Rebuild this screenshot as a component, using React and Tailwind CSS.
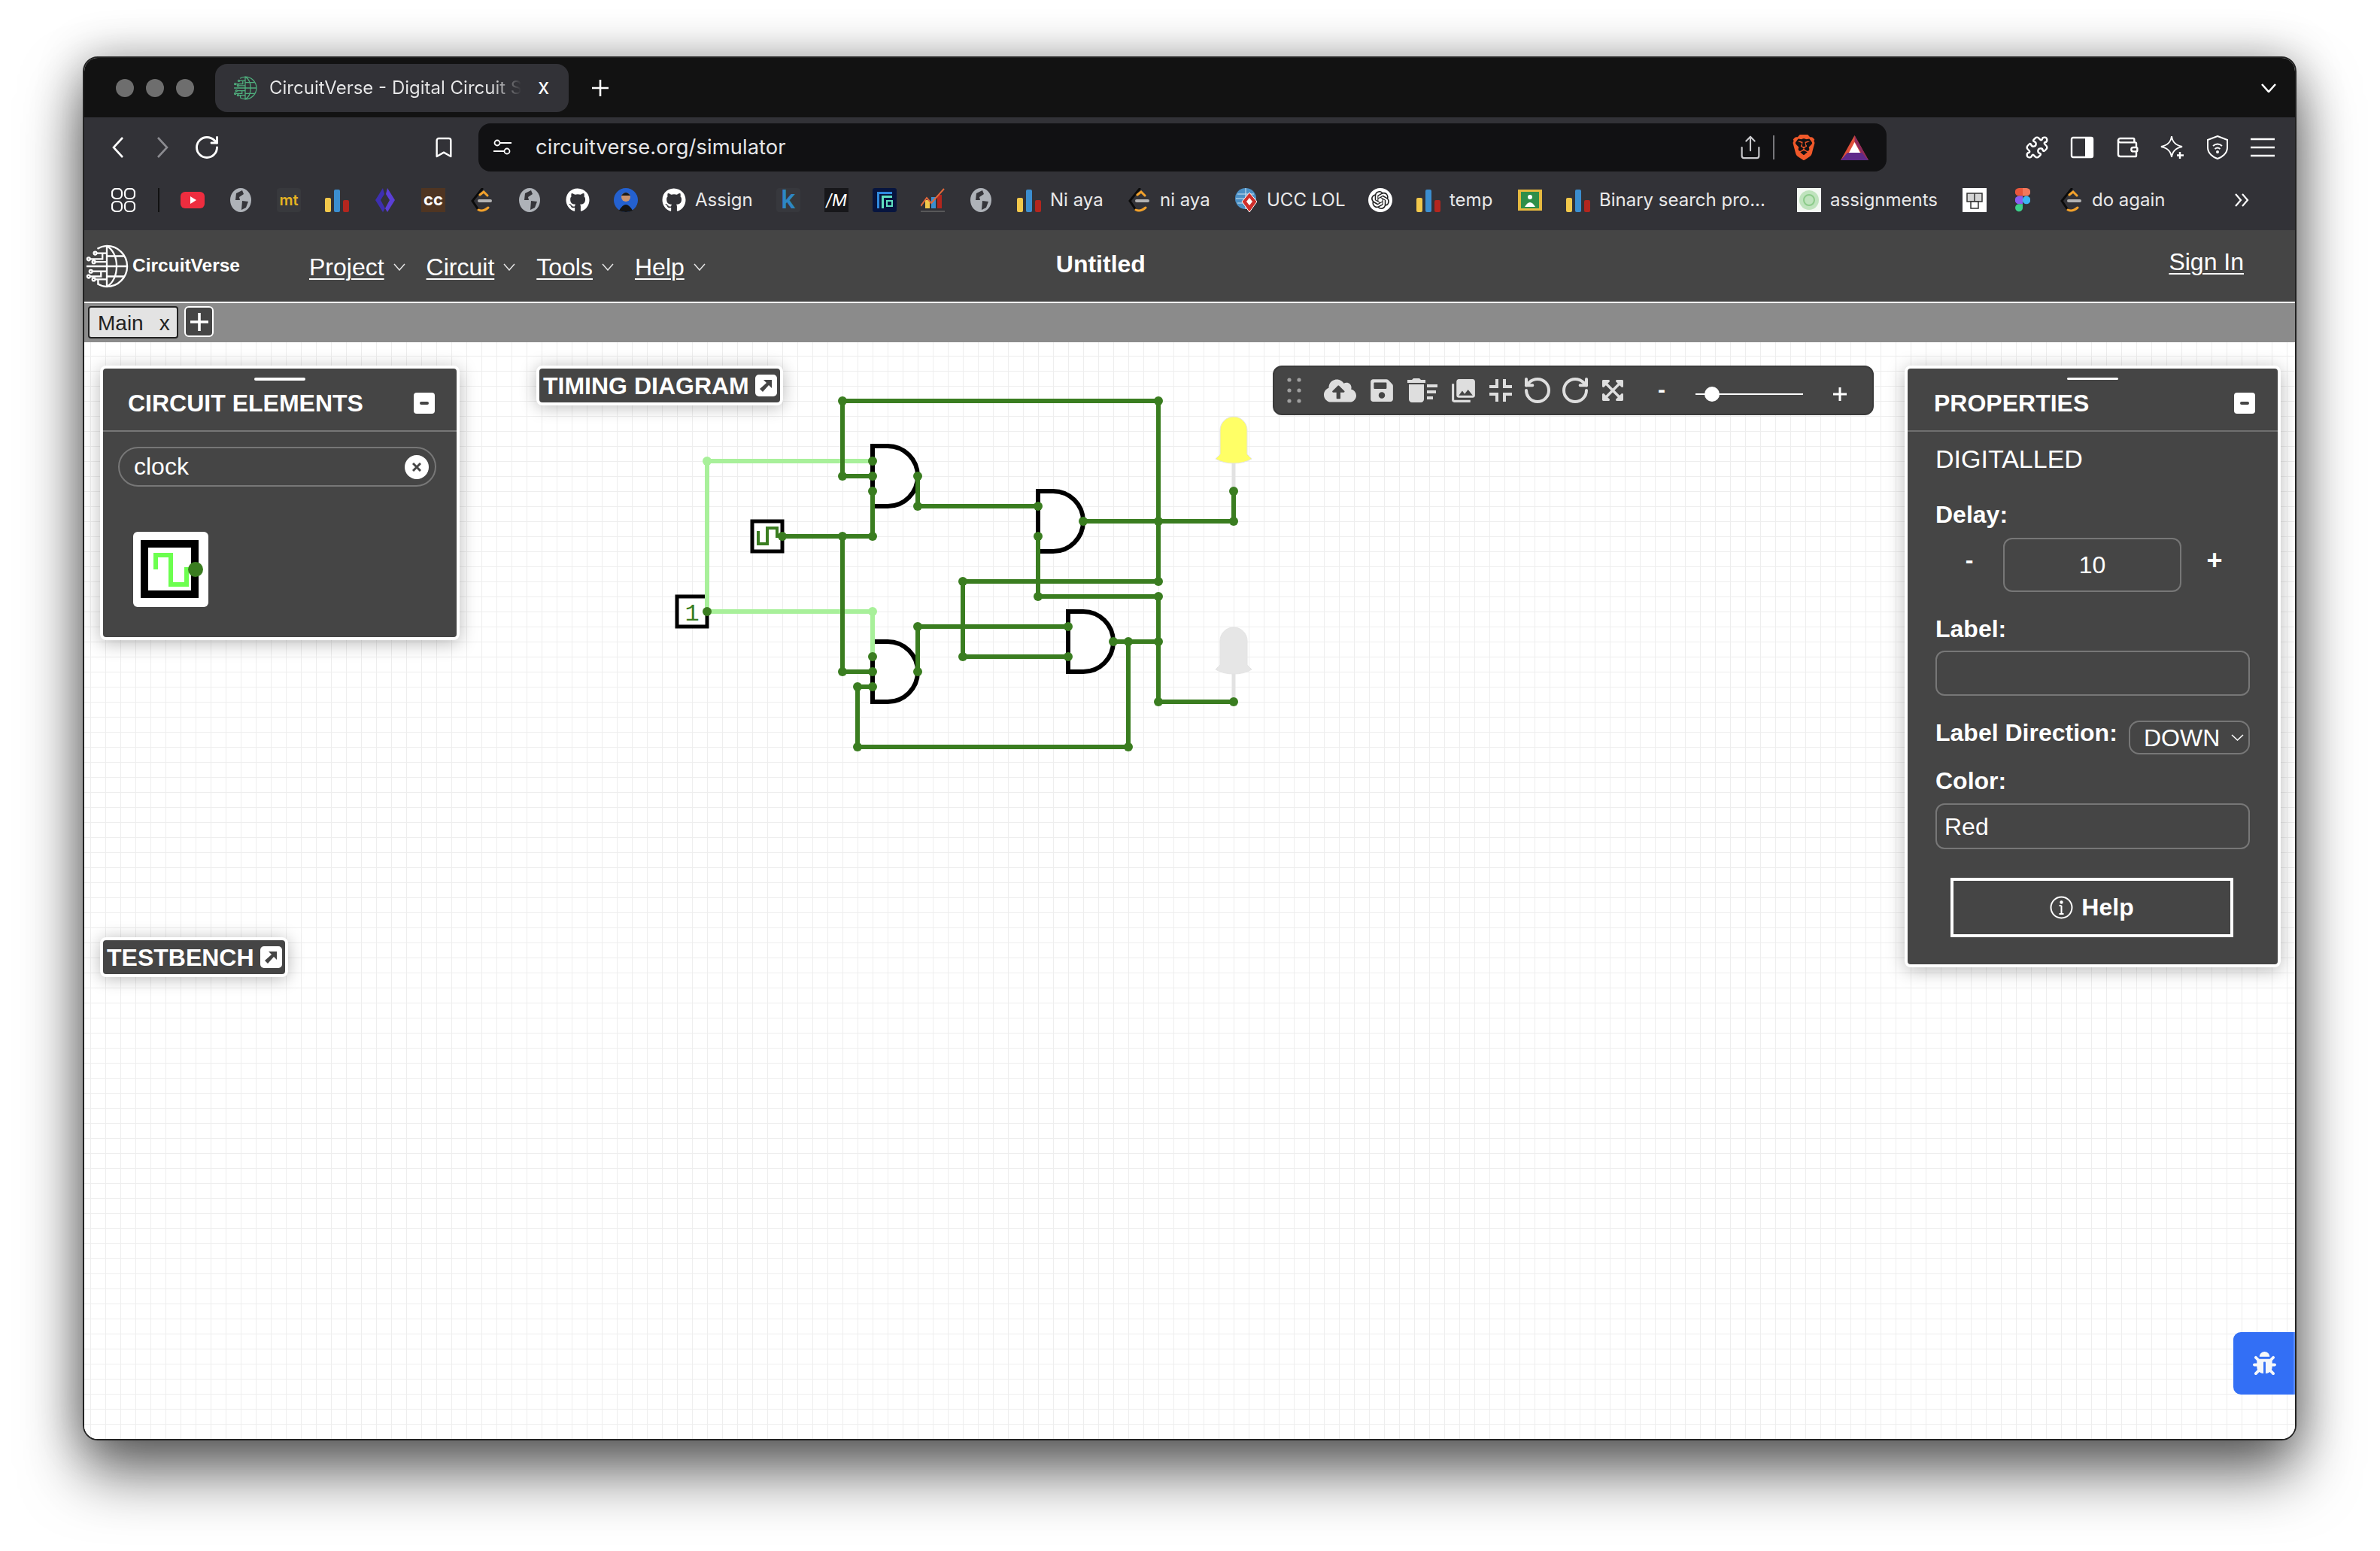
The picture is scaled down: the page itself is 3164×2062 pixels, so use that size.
import {
  Bookmark, Puzzle, RotateCcw, RotateCw, Share, Wallet,
} from 'lucide-react'
import { FaBug, FaCloudUploadAlt, FaExpandArrowsAlt, FaGithub, FaSave } from 'react-icons/fa'
import { MdDeleteSweep, MdPhotoLibrary } from 'react-icons/md'
import { SiBrave, SiOpenai } from 'react-icons/si'

const GREEN = '#3a7d20'
const LIGHT = '#a8f09a'

const darkWires = [
  [1120, 533, 1540, 533], [1120, 533, 1120, 633], [1120, 633, 1160, 633],
  [1540, 533, 1540, 773], [1160, 653, 1160, 713], [1040, 713, 1160, 713],
  [1120, 713, 1120, 893], [1120, 893, 1160, 893], [1220, 633, 1220, 673],
  [1220, 673, 1380, 673], [1440, 693, 1640, 693], [1640, 653, 1640, 693],
  [1380, 713, 1380, 793], [1280, 773, 1540, 773], [1380, 793, 1540, 793],
  [1540, 793, 1540, 933], [1540, 933, 1640, 933], [1280, 773, 1280, 873],
  [1280, 873, 1420, 873], [1220, 833, 1420, 833], [1220, 833, 1220, 893],
  [1480, 853, 1540, 853], [1500, 853, 1500, 993], [1140, 993, 1500, 993],
  [1140, 913, 1140, 993], [1140, 913, 1160, 913],
]
const lightWires = [
  [940, 613, 1160, 613], [940, 613, 940, 813], [940, 813, 1160, 813], [1160, 813, 1160, 873],
]
const darkDots = [
  [1160, 613], [1160, 633], [1160, 653], [1220, 633], [1380, 673], [1380, 713], [1440, 693],
  [1420, 833], [1420, 873], [1480, 853], [1160, 873], [1160, 893], [1160, 913], [1220, 893],
  [1120, 533], [1540, 533], [1120, 633], [940, 813], [1040, 713], [1120, 713], [1160, 713],
  [1220, 673], [1540, 693], [1640, 653], [1640, 693], [1280, 773], [1540, 773], [1380, 793],
  [1540, 793], [1220, 833], [1280, 873], [1500, 853], [1540, 853], [1120, 893], [1140, 913],
  [1140, 993], [1500, 993], [1540, 933], [1640, 933],
]
const lightDots = [[940, 613], [1160, 813]]
const gates = [[1160, 593], [1380, 653], [1420, 813], [1160, 853]]

function Led({ top, fill }) {
  const y = top
  return (
    <g>
      <line x1="1640" y1={y + 55} x2="1640" y2={y + 100} stroke="#e2e2e2" strokeWidth="5" />
      <path
        d={`M1622 ${y + 18} A18 18 0 0 1 1658 ${y + 18} V${y + 50} L1664 ${y + 56} Q1654 ${y + 62} 1640 ${y + 62} Q1626 ${y + 62} 1616 ${y + 56} L1622 ${y + 50} Z`}
        fill={fill}
        stroke="#e4e4e4"
        strokeWidth="1"
      />
    </g>
  )
}

function Circuit() {
  return (
    <svg className="absolute left-0 top-0 w-[2939px] h-[1458px]" viewBox="112 455 2939 1458" fill="none">
      <Led top={554} fill="#ffff66" />
      <Led top={834} fill="#e6e6e6" />
      {gates.map(([x, y]) => (
        <path
          key={`${x}-${y}`}
          d={`M${x} ${y + 80} V${y} H${x + 20} A40 40 0 0 1 ${x + 20} ${y + 80} Z`}
          fill="white"
          stroke="black"
          strokeWidth="6"
        />
      ))}
      <rect x="1000" y="693" width="40" height="40" fill="white" stroke="black" strokeWidth="5" />
      <polyline points="1008,706 1008,723 1020,723 1020,702 1033,702 1033,715" stroke={GREEN} strokeWidth="4" />
      <rect x="900" y="793" width="40" height="40" fill="white" stroke="black" strokeWidth="5" />
      <text x="920" y="825" fontFamily="'Liberation Mono', monospace" fontSize="32" fill={GREEN} textAnchor="middle">1</text>
      {lightWires.map((w) => (
        <line key={w.join()} x1={w[0]} y1={w[1]} x2={w[2]} y2={w[3]} stroke={LIGHT} strokeWidth="6" />
      ))}
      {darkWires.map((w) => (
        <line key={w.join()} x1={w[0]} y1={w[1]} x2={w[2]} y2={w[3]} stroke={GREEN} strokeWidth="6" />
      ))}
      {lightDots.map(([x, y]) => <circle key={`${x}-${y}`} cx={x} cy={y} r="6" fill={LIGHT} />)}
      {darkDots.map(([x, y]) => <circle key={`${x}-${y}`} cx={x} cy={y} r="6" fill={GREEN} />)}
    </svg>
  )
}

function CircuitGlobe({ className, color }) {
  return (
    <svg className={className} viewBox="0 0 60 60" fill="none" stroke={color} strokeWidth="2.4">
      <path d="M30 2 A28 28 0 1 1 30 58" />
      <path d="M30 2 V58 M30 2 C48 12 48 48 30 58 M30 16 H54 M30 30 H58 M30 44 H54" />
      <path d="M30 2 A28 28 0 0 0 17 6 M30 58 A28 28 0 0 1 17 54" />
      <path d="M30 12 H16 M24 12 V20 H6 M30 24 H14 M30 30 H2 M30 37 H10 M22 37 V44 H6 M30 48 H14 M18 48 V54" />
      <circle cx="14" cy="12" r="2" /><circle cx="5" cy="20" r="2" /><circle cx="12" cy="24" r="2" />
      <circle cx="8" cy="37" r="2" /><circle cx="5" cy="44" r="2" /><circle cx="12" cy="48" r="2" />
    </svg>
  )
}

function GrayGlobe() {
  return (
    <svg className="w-[28px] h-[32px]" viewBox="0 0 28 32">
      <ellipse cx="14" cy="16" rx="14" ry="16" fill="#aeb2b8" />
      <path d="M8 7 L16 3 L18 8 L12 12 L13 16 L7 16 Z M16 17 L24 18 L21 26 L15 29 Z" fill="#35353a" />
    </svg>
  )
}

function Bars() {
  return (
    <svg className="w-[32px] h-[32px]" viewBox="0 0 32 32">
      <rect x="0" y="13" width="8" height="19" rx="2" fill="#f2c84b" />
      <rect x="12" y="2" width="8" height="30" rx="2" fill="#3b8ed0" />
      <rect x="24" y="16" width="8" height="16" rx="2" fill="#b3261e" />
    </svg>
  )
}

function LeetCode() {
  return (
    <svg className="w-[28px] h-[32px]" viewBox="0 0 28 32" fill="none">
      <path d="M15 1 L2 17 L10 29" stroke="#0b0b0b" strokeWidth="3" strokeLinecap="round" />
      <path d="M12 9 L17 5 L22 10 M10 29 Q16 32 23 26" stroke="#f2a12b" strokeWidth="3" strokeLinecap="round" />
      <path d="M11 17 H26" stroke="#b3b3b3" strokeWidth="4" strokeLinecap="round" />
    </svg>
  )
}

function Github() {
  return <FaGithub className="w-[32px] h-[32px] text-white" />
}

const bookmarkIcons = {
  youtube: (
    <svg className="w-[32px] h-[32px]" viewBox="0 0 32 32">
      <rect x="0" y="5" width="32" height="22" rx="6" fill="#ee2d3f" />
      <path d="M13 11 L21 16 L13 21 Z" fill="white" />
    </svg>
  ),
  globe: <GrayGlobe />,
  mt: <span className="w-[32px] h-[32px] rounded bg-[#38393d] text-[#e6b422] text-[20px] leading-[32px] text-center font-semibold">mt</span>,
  bars: <Bars />,
  code: (
    <svg className="w-[32px] h-[32px]" viewBox="0 0 32 32">
      <path d="M13 0 L3 16 L13 32 L16 27 L10 16 L15 8 Z" fill="#3d2fb0" />
      <path d="M19 0 L29 16 L19 32 L16 27 L22 16 L17 8 Z" fill="#5b3fd6" />
    </svg>
  ),
  cc: <span className="w-[32px] h-[32px] bg-[#4f3522] text-white text-[22px] leading-[30px] text-center font-bold">cc</span>,
  leet: <LeetCode />,
  github: <Github />,
  avatar: (
    <svg className="w-[32px] h-[32px]" viewBox="0 0 32 32">
      <circle cx="16" cy="16" r="16" fill="#2461d0" />
      <circle cx="16" cy="12" r="6" fill="#c9936f" />
      <path d="M10 10 Q16 2 22 10 Z" fill="#1a1a1a" />
      <path d="M7 30 Q16 14 25 30 Q16 34 7 30 Z" fill="#151515" />
    </svg>
  ),
  k: <span className="w-[32px] h-[32px] rounded bg-[#37383d] text-[#2d86c4] text-[34px] leading-[30px] text-center font-semibold">k</span>,
  m: <span className="w-[32px] h-[32px] bg-[#17171a] text-white text-[22px] leading-[32px] text-center italic">/M</span>,
  pane: (
    <svg className="w-[32px] h-[32px]" viewBox="0 0 32 32">
      <rect width="32" height="32" rx="3" fill="#07153f" />
      <path d="M6 5 H26 V8 H9 V27 H6 Z" fill="#2f8ae0" />
      <path d="M12 10 H26 V13 H15 V27 H12 Z" fill="#5fe0c0" />
      <path d="M19 17 H26 V24 H19 Z" fill="#07153f" stroke="#5fe0c0" strokeWidth="2" />
    </svg>
  ),
  chart: (
    <svg className="w-[32px] h-[32px]" viewBox="0 0 32 32" fill="none">
      <rect x="6" y="16" width="6" height="11" fill="#f2c84b" />
      <rect x="14" y="12" width="6" height="15" fill="#3b8ed0" />
      <rect x="22" y="9" width="6" height="18" fill="#b3261e" />
      <path d="M0 24 L8 13 L14 20 L31 1" stroke="#e2693a" strokeWidth="2" />
      <path d="M0 31 H32" stroke="#666" strokeWidth="1.5" />
    </svg>
  ),
  ucc: (
    <svg className="w-[30px] h-[32px]" viewBox="0 0 30 32">
      <ellipse cx="15" cy="14" rx="14" ry="14" fill="#4b8fc4" />
      <path d="M4 8 H26 M2 14 H28 M4 20 H26 M15 0 V28" stroke="#d0e4f2" strokeWidth="1" />
      <path d="M20 6 L30 18 L20 32 L10 18 Z" fill="#cf2e2a" stroke="white" strokeWidth="1" />
      <path d="M20 13 L24 18 L20 23 L16 18 Z" fill="white" />
    </svg>
  ),
  openai: (
    <span className="w-[32px] h-[32px] rounded-full bg-white flex items-center justify-center">
      <SiOpenai className="w-[24px] h-[24px] text-[#222]" />
    </span>
  ),
  classroom: (
    <svg className="w-[32px] h-[32px]" viewBox="0 0 32 32">
      <rect y="2" width="32" height="28" fill="#e6b93f" />
      <rect x="4" y="5" width="24" height="22" fill="#2f8f4a" />
      <circle cx="16" cy="12" r="3" fill="white" />
      <path d="M9 25 Q16 13 23 25 Z" fill="white" />
    </svg>
  ),
  emblem: (
    <svg className="w-[32px] h-[32px]" viewBox="0 0 32 32" fill="none">
      <rect width="32" height="32" fill="#f3f8f2" />
      <circle cx="16" cy="16" r="13" fill="#bfe3bd" />
      <circle cx="16" cy="16" r="7" stroke="#8ccb8a" strokeWidth="2" />
    </svg>
  ),
  boxes: (
    <svg className="w-[32px] h-[32px]" viewBox="0 0 32 32" fill="none">
      <rect width="32" height="32" fill="white" />
      <rect x="6" y="7" width="20" height="11" fill="#d5d5d5" stroke="#333" strokeWidth="1.5" />
      <path d="M16 7 V18" stroke="#333" strokeWidth="1.5" />
      <rect x="11" y="18" width="10" height="9" fill="white" stroke="#333" strokeWidth="1.5" />
    </svg>
  ),
  figma: (
    <svg className="w-[20px] h-[32px]" viewBox="0 0 20 32">
      <path d="M10 0 H5 A5 5 0 0 0 5 10.6 H10 Z" fill="#e8563c" />
      <path d="M10 0 H15 A5 5 0 0 1 15 10.6 H10 Z" fill="#f2785c" />
      <path d="M10 10.6 H5 A5 5 0 0 0 5 21.2 H10 Z" fill="#8a5cf0" />
      <circle cx="15" cy="15.9" r="5.3" fill="#3db4f2" />
      <path d="M5 21.2 H10 V27 A5 5 0 1 1 5 21.2 Z" fill="#3dcf8a" />
    </svg>
  ),
}

const bookmarks = [
  { icon: 'globe' }, { icon: 'mt' }, { icon: 'bars' }, { icon: 'code' }, { icon: 'cc' },
  { icon: 'leet' }, { icon: 'globe' }, { icon: 'github' }, { icon: 'avatar' },
  { icon: 'github', text: 'Assign', width: 'w-[76px]' },
  { icon: 'k' }, { icon: 'm' }, { icon: 'pane' }, { icon: 'chart' }, { icon: 'globe' },
  { icon: 'bars', text: 'Ni aya', width: 'w-[70px]' },
  { icon: 'leet', text: 'ni aya', width: 'w-[66px]' },
  { icon: 'ucc', text: 'UCC LOL', width: 'w-[103px]' },
  { icon: 'openai' },
  { icon: 'bars', text: 'temp', width: 'w-[59px]' },
  { icon: 'classroom' },
  { icon: 'bars', text: 'Binary search pro...', width: 'w-[231px]' },
  { icon: 'emblem', text: 'assignments', width: 'w-[144px]' },
  { icon: 'boxes' }, { icon: 'figma' },
  { icon: 'leet', text: 'do again', width: 'w-[96px]' },
]

function BrowserChrome() {
  return (
    <div className="font-['Inter',sans-serif] text-white">
      <div className="h-[79px] bg-[#121212] flex items-center pl-[42px]">
        <span className="w-[24px] h-[24px] rounded-full bg-[#6e6e6e]" />
        <span className="w-[24px] h-[24px] rounded-full bg-[#6e6e6e] ml-[16px]" />
        <span className="w-[24px] h-[24px] rounded-full bg-[#6e6e6e] ml-[16px]" />
        <div className="ml-[28px] w-[470px] h-[64px] rounded-[16px] bg-[#323237] flex items-center pl-[24px]">
          <CircuitGlobe className="w-[32px] h-[32px] shrink-0" color="#4fae7d" />
          <span className="ml-[16px] w-[335px] whitespace-nowrap text-[24px] bg-[linear-gradient(90deg,#e9e9ea_88%,#323237_100%)] bg-clip-text text-transparent">CircuitVerse - Digital Circuit S</span>
          <span className="ml-[22px] text-[28px] leading-none -mt-[4px]">x</span>
        </div>
        <svg className="ml-[31px] w-[22px] h-[22px]" viewBox="0 0 22 22" stroke="white" strokeWidth="2.6">
          <path d="M11 0 V22 M0 11 H22" />
        </svg>
        <svg className="ml-auto mr-[25px] w-[20px] h-[12px]" viewBox="0 0 20 12" fill="none" stroke="white" strokeWidth="2.6">
          <path d="M1 1 L10 11 L19 1" />
        </svg>
      </div>

      <div className="h-[150px] bg-[#323237]">
        <div className="h-[80px] flex items-center">
          <svg className="ml-[37px] w-[16px] h-[28px] shrink-0" viewBox="0 0 16 28" fill="none" stroke="white" strokeWidth="2.6">
            <path d="M14 1 L2 14 L14 27" />
          </svg>
          <svg className="ml-[43px] w-[16px] h-[28px] shrink-0" viewBox="0 0 16 28" fill="none" stroke="#8b8b90" strokeWidth="2.6">
            <path d="M2 1 L14 14 L2 27" />
          </svg>
          <RotateCw className="ml-[33px] w-[36px] h-[36px] shrink-0 text-white" strokeWidth={1.9} />
          <Bookmark className="ml-[281px] w-[32px] h-[34px] shrink-0 text-white" strokeWidth={1.8} />
          <div className="ml-[30px] w-[1872px] h-[64px] rounded-[16px] bg-[#111113] flex items-center pl-[20px] pr-[24px] shrink-0">
            <svg className="w-[24px] h-[22px] shrink-0" viewBox="0 0 24 22" fill="none" stroke="white" strokeWidth="1.8">
              <circle cx="5" cy="5" r="3.5" /><path d="M9 5 H24 M0 16 H14" /><circle cx="18" cy="16" r="3.5" />
            </svg>
            <span className="ml-[32px] text-[27.3px] tracking-[0.1px] text-[#e6e6e8] flex-1">circuitverse.org/simulator</span>
            <Share className="w-[34px] h-[34px] text-[#c9c9cc] shrink-0" strokeWidth={1.5} />
            <span className="ml-[13px] w-[2px] h-[32px] bg-[#77777b]" />
            <SiBrave className="ml-[22px] w-[34px] h-[36px] text-[#f1592a] shrink-0" />
            <svg className="ml-[32px] w-[37px] h-[33px] shrink-0" viewBox="0 0 37 33">
              <path d="M18.5 0 L37 33 H0 Z" fill="#e0503a" />
              <path d="M18.5 0 L37 33 L27 23 L18.5 8 Z" fill="#8e2a5e" />
              <path d="M0 33 L9 23 H28 L37 33 Z" fill="#5f2a8a" />
              <path d="M18.5 9 L26 23 H11 Z" fill="white" />
            </svg>
          </div>
          <div className="ml-[184px] flex gap-[28px] shrink-0 text-white">
            <Puzzle className="w-[32px] h-[32px]" strokeWidth={1.8} />
            <svg className="w-[32px] h-[32px]" viewBox="0 0 32 32" fill="none">
              <rect x="2" y="3" width="28" height="26" rx="2" stroke="white" strokeWidth="2.4" />
              <rect x="20" y="3" width="10" height="26" fill="white" />
            </svg>
            <Wallet className="w-[32px] h-[32px]" strokeWidth={1.8} />
            <svg className="w-[32px] h-[32px]" viewBox="0 0 32 32" fill="none" stroke="white" strokeWidth="2">
              <path d="M15 1 C16 9 20 13 29 15 C20 17 16 21 15 29 C14 21 10 17 1 15 C10 13 14 9 15 1 Z" />
              <path d="M26 22 V31 M22 26.5 H31" strokeWidth="2.4" />
            </svg>
            <svg className="w-[32px] h-[32px]" viewBox="0 0 32 32" fill="none" stroke="white" strokeWidth="2">
              <path d="M16 1 L29 6 V16 C29 24 22 29 16 31 C10 29 3 24 3 16 V6 Z" />
              <path d="M10 14 Q16 9 22 14 M12.5 18 Q16 15 19.5 18" /><circle cx="16" cy="22" r="1" fill="white" />
            </svg>
            <svg className="w-[32px] h-[32px]" viewBox="0 0 32 32" stroke="white" strokeWidth="2.4">
              <path d="M0 5 H32 M0 16 H32 M0 27 H32" />
            </svg>
          </div>
        </div>

        <div className="h-[60px] flex items-center">
          <svg className="ml-[36px] w-[32px] h-[32px] shrink-0" viewBox="0 0 32 32" fill="none" stroke="white" strokeWidth="2.2">
            <rect x="1" y="1" width="13" height="13" rx="5" /><rect x="18" y="1" width="13" height="13" rx="5" />
            <rect x="1" y="18" width="13" height="13" rx="5" /><rect x="18" y="18" width="13" height="13" rx="5" />
          </svg>
          <span className="ml-[30px] w-[2px] h-[32px] bg-[#111]" />
          <div className="ml-[28px] shrink-0 flex items-center">{bookmarkIcons.youtube}</div>
          <div className="ml-[32px] flex items-center gap-[32px] shrink-0">
            {bookmarks.map((b, i) => (
              <div key={i} className="flex items-center shrink-0">
                <span className="w-[32px] h-[32px] flex items-center justify-center shrink-0">{bookmarkIcons[b.icon]}</span>
                {b.text && (
                  <span className={`ml-[12px] text-[24px] text-[#e9e9ea] whitespace-nowrap ${b.width}`}>{b.text}</span>
                )}
              </div>
            ))}
          </div>
          <svg className="ml-[93px] w-[20px] h-[20px] shrink-0" viewBox="0 0 20 20" fill="none" stroke="white" strokeWidth="2.2">
            <path d="M2 2 L9 10 L2 18 M11 2 L18 10 L11 18" />
          </svg>
        </div>
      </div>
    </div>
  )
}

function NavItem({ label, className }) {
  return (
    <div className={`flex items-center shrink-0 mt-[3px] ${className}`}>
      <span className="underline text-[32px] leading-[40px] underline-offset-[4px] decoration-2">{label}</span>
      <svg className="ml-[12px] w-[16px] h-[10px]" viewBox="0 0 16 10" fill="none" stroke="#e5e5e5" strokeWidth="1.5">
        <path d="M1 1 L8 9 L15 1" />
      </svg>
    </div>
  )
}

function AppHeader() {
  return (
    <div className="relative h-[95px] bg-[#454545] text-white flex items-center">
      <CircuitGlobe className="ml-[1px] w-[58px] h-[60px] shrink-0" color="white" />
      <span className="ml-[5px] text-[24.5px] font-bold shrink-0">CircuitVerse</span>
      <NavItem label="Project" className="ml-[92px]" />
      <NavItem label="Circuit" className="ml-[28px]" />
      <NavItem label="Tools" className="ml-[28px]" />
      <NavItem label="Help" className="ml-[28px]" />
      <span className="ml-[466px] -mt-[6px] text-[32px] font-bold shrink-0">Untitled</span>
      <span className="ml-auto mr-[68px] -mt-[12px] underline text-[32px] underline-offset-[4px] decoration-2 shrink-0">Sign In</span>
    </div>
  )
}

function TabRow() {
  return (
    <div className="h-[54px] border-t-2 border-white bg-[#8b8b8b] flex items-start pt-[4px] pl-[5px]">
      <div className="w-[120px] h-[43px] rounded-[4px] border-2 border-[#222] bg-[#e3e3e3] flex items-center pl-[11px] text-[28px] text-[#222] shrink-0">
        <span className="mt-[2px]">Main</span>
        <span className="ml-[21px] mt-[2px]">x</span>
      </div>
      <div className="ml-[8px] w-[39px] h-[41px] rounded-[6px] border-2 border-white bg-[#454545] flex items-center justify-center">
        <svg className="w-[24px] h-[24px]" viewBox="0 0 24 24" stroke="white" strokeWidth="3.6"><path d="M12 0 V24 M0 12 H24" /></svg>
      </div>
    </div>
  )
}

function PopIcon() {
  return (
    <span className="w-[29px] h-[29px] rounded-[5px] bg-white flex items-center justify-center shrink-0">
      <svg className="w-[18px] h-[18px]" viewBox="0 0 18 18" fill="#454545">
        <path d="M6 1 H17 V12 L13 8 L5 17 L1 13 L10 5 Z" />
      </svg>
    </span>
  )
}

function MinusButton() {
  return (
    <button className="w-[28px] h-[28px] rounded-[4px] bg-white flex items-center justify-center">
      <span className="w-[12px] h-[4px] bg-[#454545] rounded-sm" />
    </button>
  )
}

function PopTab({ label, className }) {
  return (
    <div className={`absolute h-[53px] rounded-[8px] border-4 border-white bg-[#454545] shadow-[0_2px_22px_rgba(0,0,0,0.28)] text-white text-[32px] font-bold flex items-center pl-[5px] pr-[4px] gap-[8px] ${className}`}>
      <span>{label}</span>
      <PopIcon />
    </div>
  )
}

function PanelHead({ title, pl, pr, thin }) {
  return (
    <div className={`h-[84px] border-b-2 pt-[12px] ${thin ? 'border-[#6f6f6f]' : 'border-[#777]'}`}>
      <div className={`mx-auto w-[68px] rounded-full bg-white ${thin ? 'h-[3px] mb-[17px]' : 'h-[4px] mb-[16px]'}`} />
      <div className={`flex items-center justify-between ${pl} ${pr}`}>
        <span className="text-[32px] leading-[28px] font-bold text-white">{title}</span>
        <MinusButton />
      </div>
    </div>
  )
}

function ElementsPanel() {
  return (
    <div className="absolute left-[21px] top-[31px] w-[478px] h-[365px] rounded-[8px] border-4 border-white bg-[#454545] shadow-[0_4px_24px_rgba(0,0,0,0.28)]">
      <PanelHead title="CIRCUIT ELEMENTS" pl="pl-[33px]" pr="pr-[29px]" />
      <div className="ml-[20px] mt-[20px] w-[423px] h-[53px] rounded-full border-2 border-[#777] flex items-center pl-[19px] pr-[8px] text-white text-[32px]">
        <span className="flex-1 -mt-[2px]">clock</span>
        <span className="w-[32px] h-[32px] rounded-full bg-white flex items-center justify-center">
          <svg className="w-[12px] h-[12px]" viewBox="0 0 12 12" stroke="#454545" strokeWidth="3"><path d="M1 1 L11 11 M11 1 L1 11" /></svg>
        </span>
      </div>
      <div className="ml-[40px] mt-[60px] w-[100px] h-[100px] rounded-[6px] bg-white">
        <svg className="w-[100px] h-[100px]" viewBox="0 0 100 100" fill="none">
          <rect x="15" y="16" width="67" height="67" fill="white" stroke="black" strokeWidth="10" />
          <polyline points="30,50 30,31 50,31 50,70 71,70 71,50 82,50" stroke="#6cff4f" strokeWidth="6" />
          <circle cx="83" cy="50" r="10" fill={GREEN} />
        </svg>
      </div>
    </div>
  )
}

function Field({ className, children }) {
  return (
    <div className={`rounded-[12px] border-2 border-[#777] text-white text-[32px] ${className}`}>{children}</div>
  )
}

function PropLabel({ className, children }) {
  return <div className={`text-[32px] leading-[40px] font-bold text-white ${className}`}>{children}</div>
}

function PropertiesPanel() {
  return (
    <div className="absolute left-[2420px] top-[31px] w-[500px] h-[800px] rounded-[8px] border-4 border-white bg-[#454545] shadow-[0_4px_24px_rgba(0,0,0,0.28)]">
      <PanelHead title="PROPERTIES" pl="pl-[35px]" pr="pr-[30px]" thin />
      <div className="pl-[37px] pr-[37px]">
        <div className="mt-[16px] text-[34px] leading-[40px] text-white">DIGITALLED</div>
        <PropLabel className="mt-[34px]">Delay:</PropLabel>
        <div className="mt-[11px] flex items-center text-white font-bold">
          <span className="w-[90px] text-center text-[32px] pb-[14px]">-</span>
          <Field className="w-[237px] h-[72px] flex items-center justify-center font-normal">10</Field>
          <span className="w-[88px] text-center text-[36px] leading-none pb-[12px]">+</span>
        </div>
        <PropLabel className="mt-[29px]">Label:</PropLabel>
        <Field className="mt-[9px] h-[60px] w-[418px]" />
        <div className="mt-[33px] flex items-start justify-between">
          <PropLabel className="-mt-[4px] -mb-[6px]">Label Direction:</PropLabel>
          <Field className="w-[161px] h-[45px] rounded-[14px] flex items-center pl-[18px]">
            <span>DOWN</span>
            <svg className="ml-[15px] w-[17px] h-[9px]" viewBox="0 0 17 9" fill="none" stroke="white" strokeWidth="1.5"><path d="M1 1 L8.5 8 L16 1" /></svg>
          </Field>
        </div>
        <PropLabel className="mt-[15px]">Color:</PropLabel>
        <Field className="mt-[10px] h-[61px] w-[418px] flex items-center pl-[10px]">Red</Field>
        <button className="mt-[38px] ml-[20px] w-[376px] h-[79px] border-4 border-white flex items-center justify-center text-white text-[32px] font-bold">
          <svg className="w-[31px] h-[31px]" viewBox="0 0 31 31" fill="none" stroke="white" strokeWidth="2">
            <circle cx="15.5" cy="15.5" r="14" /><path d="M15.5 13 V24 M12.5 13 H15.5 M12.5 24 H18.5" /><circle cx="15.5" cy="8.5" r="1.2" fill="white" />
          </svg>
          <span className="ml-[11px] -mt-[1px]">Help</span>
        </button>
      </div>
    </div>
  )
}

function Toolbar() {
  return (
    <div className="absolute left-[1580px] top-[31px] w-[799px] h-[66px] rounded-[12px] border-2 border-[#3b3b3b] bg-[#454545] flex items-center text-[#dedede]">
      <svg className="ml-[17px] w-[20px] h-[34px] shrink-0" viewBox="0 0 20 34" fill="#a0a0a0">
        <circle cx="3" cy="3" r="2.6" /><circle cx="16" cy="3" r="2.6" />
        <circle cx="3" cy="17" r="2.6" /><circle cx="16" cy="17" r="2.6" />
        <circle cx="3" cy="31" r="2.6" /><circle cx="16" cy="31" r="2.6" />
      </svg>
      <span className="ml-[29px] w-[43px] flex justify-center"><FaCloudUploadAlt className="w-[43px] h-[43px] shrink-0" /></span>
      <span className="ml-[19px] w-[30px] flex justify-center"><FaSave className="w-[34px] h-[34px] shrink-0" /></span>
      <span className="ml-[19px] w-[40px] flex justify-center"><MdDeleteSweep className="w-[48px] h-[48px] shrink-0" /></span>
      <span className="ml-[19px] w-[31px] flex justify-center"><MdPhotoLibrary className="w-[37px] h-[37px] shrink-0" /></span>
      <svg className="ml-[19px] w-[30px] h-[30px] shrink-0" viewBox="0 0 30 30" fill="none" stroke="#dedede" strokeWidth="4">
        <path d="M10 0 V10 H0 M20 0 V10 H30 M0 20 H10 V30 M30 20 H20 V30" />
      </svg>
      <span className="ml-[18px] w-[32px] flex justify-center"><RotateCcw className="w-[40px] h-[40px] shrink-0" strokeWidth={2.4} /></span>
      <span className="ml-[18px] w-[32px] flex justify-center"><RotateCw className="w-[40px] h-[40px] shrink-0" strokeWidth={2.4} /></span>
      <span className="ml-[20px] w-[28px] flex justify-center"><FaExpandArrowsAlt className="w-[32px] h-[32px] shrink-0" /></span>
      <span className="ml-[46px] w-[8px] text-white text-[30px] font-bold leading-none -mt-[2px]">-</span>
      <div className="relative ml-[42px] mt-[10px] w-[143px] h-[2px] bg-white shrink-0">
        <span className="absolute left-[12px] -top-[9px] w-[20px] h-[20px] rounded-full bg-white" />
      </div>
      <svg className="ml-[40px] mt-[10px] w-[18px] h-[18px] shrink-0" viewBox="0 0 18 18" stroke="white" strokeWidth="3"><path d="M9 0 V18 M0 9 H18" /></svg>
    </div>
  )
}

function Canvas() {
  return (
    <div className="relative flex-1 overflow-hidden bg-white font-['Liberation_Sans',Arial,sans-serif] bg-[linear-gradient(to_right,#eeeeee_1.5px,transparent_1.5px),linear-gradient(to_bottom,#eeeeee_1.5px,transparent_1.5px)] bg-[length:20px_20px] bg-[position:8px_18px]">
      <Circuit />
      <ElementsPanel />
      <PopTab label="TIMING DIAGRAM" className="left-[601px] top-[31px]" />
      <Toolbar />
      <PropertiesPanel />
      <PopTab label="TESTBENCH" className="left-[21px] top-[791px]" />
      <div className="absolute right-0 top-[1316px] w-[82px] h-[83px] rounded-l-[10px] bg-[#336ff5] border-r-2 border-[#5a8cf8] flex items-center justify-center pl-[2px]">
        <FaBug className="w-[31px] h-[31px] text-[#f5f7fa]" />
      </div>
    </div>
  )
}

export default function App() {
  return (
    <div className="w-[3164px] h-[2062px] overflow-hidden bg-white pl-[110px] pt-[75px]">
      <div className="w-[2943px] h-[1840px] flex flex-col rounded-[20px] border-2 border-[#222] overflow-hidden shadow-[0_44px_80px_rgba(0,0,0,0.58),0_0_60px_rgba(0,0,0,0.3)]">
        <BrowserChrome />
        <div className="font-['Liberation_Sans',Arial,sans-serif]">
          <AppHeader />
          <TabRow />
        </div>
        <Canvas />
      </div>
    </div>
  )
}
